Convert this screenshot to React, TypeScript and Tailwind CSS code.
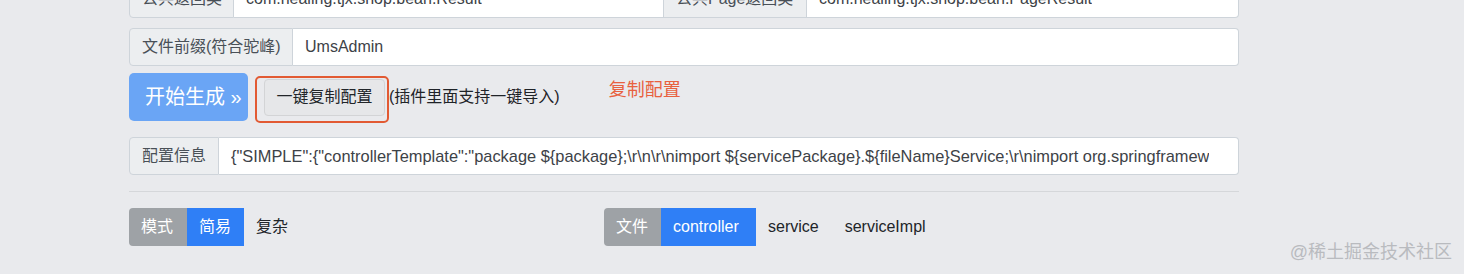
import React from "react";

const FONT = { fontFamily: '"Liberation Sans", "Noto Sans CJK SC", sans-serif' };

function Label({ text, w, rounded = true, borderLeft = true }: { text: string; w: string; rounded?: boolean; borderLeft?: boolean }) {
  return (
    <div
      className={`${w} shrink-0 flex items-center px-3 border-y border-r border-[#ced4da] bg-[#eceef0] text-[#495057] text-[16px] whitespace-nowrap ${borderLeft ? "border-l" : ""} ${rounded ? "rounded-l" : ""}`}
    >
      {text}
    </div>
  );
}

function Field({ text, w, rounded = true, extra = "" }: { text: string; w: string; rounded?: boolean; extra?: string }) {
  return (
    <div
      className={`${w} min-w-0 flex items-center pl-3 border-y border-r border-[#ced4da] bg-white text-[#3d4247] whitespace-nowrap ${rounded ? "rounded-r" : ""} ${extra}`}
    >
      <span className="block overflow-hidden">{text}</span>
    </div>
  );
}

export default function App() {
  const config =
    '{"SIMPLE":{"controllerTemplate":"package ${package};\\r\\n\\r\\nimport ${servicePackage}.${fileName}Service;\\r\\nimport org.springframework.web.bind.annotation.*;';
  return (
    <div className="relative w-full h-[274px] overflow-hidden bg-[#e9eaed]" style={FONT}>
      <div className="w-[1110px] ml-[129px] flex flex-col">
        {/* row 1 */}
        <div className="flex h-[38px] -mt-[20px]">
          <Label text="公共返回类" w="w-[105px]" />
          <Field text="com.healing.tjx.shop.bean.Result" w="w-[430px]" rounded={false} extra="pr-3 text-[16px]" />
          <Label text="公共Page返回类" w="w-[143px]" rounded={false} borderLeft={false} />
          <Field text="com.healing.tjx.shop.bean.PageResult" w="flex-1" extra="pr-3 text-[16px]" />
        </div>
        {/* row 2 */}
        <div className="flex h-[38px] mt-[10px]">
          <Label text="文件前缀(符合驼峰)" w="w-[164px]" />
          <Field text="UmsAdmin" w="flex-1" extra="pr-3 text-[16px]" />
        </div>
        {/* buttons */}
        <div className="flex items-center h-[48px] mt-[7px]">
          <button className="h-[48px] w-[119px] rounded-[5px] bg-[#6aa5f5] text-white text-[20px] px-4 text-left whitespace-nowrap">
            开始生成 »
          </button>
          <div className="relative ml-[16px]">
            <button className="h-[37px] w-[121px] rounded-[4px] bg-[#e6e7e9] border border-[#d3d4d6] text-[#212529] text-[16px] whitespace-nowrap">
              一键复制配置
            </button>
            <span className="absolute -left-[9px] -right-[4px] -top-[3px] -bottom-[7px] border-2 border-[#e25a33] rounded-[5px]"></span>
          </div>
          <span className="ml-[4px] text-[16px] text-[#1f2328] whitespace-nowrap">(插件里面支持一键导入)</span>
          <span className="ml-[49px] mb-[14px] text-[18px] text-[#e8613f] whitespace-nowrap">复制配置</span>
        </div>
        {/* config row */}
        <div className="flex h-[38px] mt-[16px]">
          <Label text="配置信息" w="w-[90px]" />
          <Field text={config} w="flex-1" extra="pr-[29px] text-[16.4px]" />
        </div>
        <div className="h-px bg-[#d5d7da] mt-[16px]"></div>
        {/* bottom */}
        <div className="flex mt-[16px] h-[38px]">
          <div className="flex w-[475px]">
            <div className="h-[38px] w-[58px] px-3 flex items-center bg-[#9ea2a6] text-white text-[16px] rounded-l">模式</div>
            <div className="h-[38px] w-[57px] px-3 flex items-center bg-[#2f7ff6] text-white text-[16px]">简易</div>
            <div className="h-[38px] px-3 flex items-center text-[#212529] text-[16px]">复杂</div>
          </div>
          <div className="flex">
            <div className="h-[38px] w-[57px] px-3 flex items-center bg-[#9ea2a6] text-white text-[16px] rounded-l">文件</div>
            <div className="h-[38px] w-[95px] px-3 flex items-center bg-[#2f7ff6] text-white text-[16px]">controller</div>
            <div className="h-[38px] px-3 flex items-center text-[#212529] text-[16px]">service</div>
            <div className="h-[38px] pl-[14px] pr-3 flex items-center text-[#212529] text-[16px]">serviceImpl</div>
          </div>
        </div>
      </div>
      <div className="absolute right-[12px] bottom-[8px] text-[18px] text-[#b9bbbf] whitespace-nowrap">@稀土掘金技术社区</div>
    </div>
  );
}
